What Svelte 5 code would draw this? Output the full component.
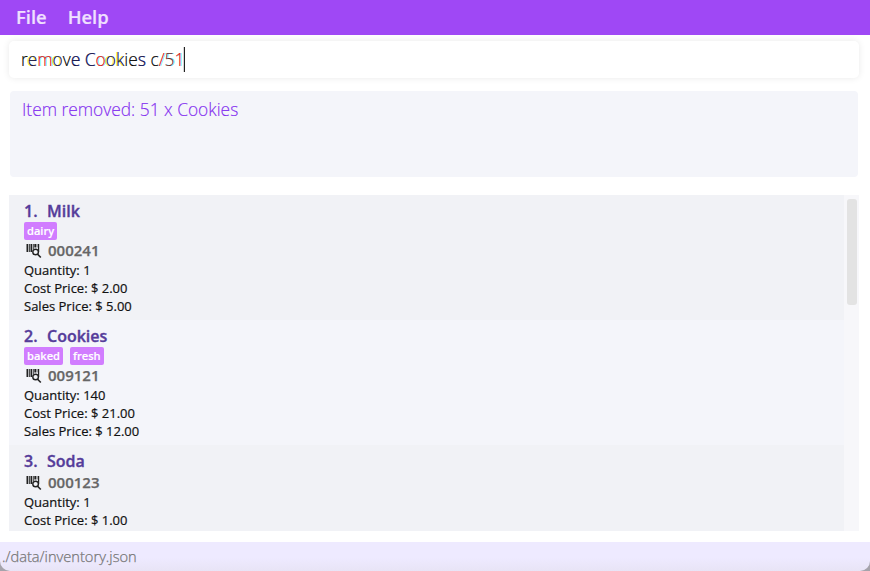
<script>
  const items = [
    { name: 'Milk', tags: ['dairy'], code: '000241', lines: ['Quantity: 1', 'Cost Price: $ 2.00', 'Sales Price: $ 5.00'] },
    { name: 'Cookies', tags: ['baked', 'fresh'], code: '009121', lines: ['Quantity: 140', 'Cost Price: $ 21.00', 'Sales Price: $ 12.00'] },
    { name: 'Soda', tags: [], code: '000123', lines: ['Quantity: 1', 'Cost Price: $ 1.00'] }
  ];

  // Runs of the typed command with the colour fringe each one carries.
  const command = [
    ['r', ''], ['e', 'warm'], ['m', 'red'], ['o', 'warm'], ['v', ''], ['e', 'cool'], [' ', ''],
    ['C', 'cool'], ['o', 'red'], ['o', 'warm'], ['k', 'warm'], ['i', ''], ['e', ''], ['s', 'cool'],
    [' c', ''], ['/', 'red'], ['5', 'teal'], ['1', 'red']
  ];
</script>

<div class="window">
  <nav class="menu"><span class="file">File</span><span class="help">Help</span></nav>
  <main>
    <div class="command"><div class="typed">{#each command as [text, tone]}<span class={tone}>{text}</span>{/each}</div><i class="caret"></i></div>
    <div class="result">Item removed: 51 x Cookies</div>
    <section class="panel">
      <div class="list">
        {#each items as item, i}
          <article>
            <h2><span class="num">{i + 1}.</span><span>{item.name}</span></h2>
            {#if item.tags.length}
              <div class="tags">{#each item.tags as tag}<span class="tag">{tag}</span>{/each}</div>
            {/if}
            <div class="code">
              <svg width="17" height="16" viewBox="0 0 17 16">
                <path d="M1.5 1h1.7v8H1.5zM3.9 1h.9v8h-.9zM5.5 1h1.7v8H5.5zM7.9 1h.8v5.2h-.8zM9.3 1h1.8v3.6H9.3zM11.7 1h.7v3.6h-.7zM13 1h1.2v8H13z" fill="#222" />
                <circle cx="10.6" cy="9" r="2.8" fill="#f2f3f7" stroke="#222" stroke-width="1.4" />
                <path d="M12.6 11.2l3.2 3.3" stroke="#222" stroke-width="1.6" />
              </svg>
              <span>{item.code}</span>
            </div>
            {#each item.lines as line}<p>{line}</p>{/each}
          </article>
        {/each}
      </div>
      <div class="track"><div class="thumb"></div></div>
    </section>
  </main>
  <footer><div class="status">./data/inventory.json</div></footer>
</div>

<style>
  .window { width: 870px; height: 571px; display: flex; flex-direction: column; background: #fff; font-family: "Open Sans", "Noto Sans", sans-serif; overflow: hidden; white-space: nowrap; }
  .menu { height: 35px; flex: none; background: #9f48f5; color: #f0e0ff; font-size: 18.4px; font-weight: 600; line-height: 33px; display: flex; padding-left: 16px; gap: 21px; box-sizing: border-box; -webkit-text-stroke: .2px #f0e0ff; }
  main { flex: 1; min-height: 0; padding: 6px 11px 11px 9px; display: flex; flex-direction: column; }
  .command { height: 37px; flex: none; border-radius: 5px; box-shadow: 0 0 7px rgba(0, 0, 0, .09); display: flex; align-items: center; padding-left: 12px; box-sizing: border-box; color: #000; font-size: 17.35px; font-weight: 300; }
  .typed { white-space: pre; padding-bottom: 2px; -webkit-text-stroke: .15px currentColor; }
  .warm { color: #111155; text-shadow: -1px 0 0 #ffff00; }
  .cool { color: #111144; text-shadow: .4px 0 0 #0000c080; }
  .red { color: #e01010; text-shadow: 1px 0 0 #00ffffb0; }
  .teal { color: #703030; text-shadow: 1px 0 0 #00ffffb0; }
  .caret { width: 1px; height: 25px; margin-left: -.3px; background: #222; box-shadow: -1px 0 0 #9996; }
  .result { height: 86px; flex: none; margin: 13px 1px 18px; border-radius: 4px; background: #f4f5fa; color: #8430f0; font-size: 17.35px; font-weight: 300; line-height: 24px; padding: 6px 12px; box-sizing: border-box; -webkit-text-stroke: .15px #8430f0; }
  .panel { flex: 1; min-height: 0; display: flex; background: #f7f7fa; }
  .list { flex: 1; overflow: hidden; }
  article { padding: 7px 15px 5px; background: #f1f2f6; }
  article:nth-child(even) { background: #f4f5fa; }
  h2 { margin: 0; height: 20px; line-height: 19px; font-size: 16px; font-weight: 600; color: #553c9a; display: flex; -webkit-text-stroke: .35px #553c9a; }
  .num { width: 23px; }
  .tags { height: 18px; display: flex; gap: 7px; }
  .tag { height: 18px; border-radius: 2px; background: #d17dff; color: #fff; padding: 0 3px; font-size: 11.1px; font-weight: 600; line-height: 18px; -webkit-text-stroke: .15px #fff; }
  .code { height: 19px; padding-bottom: 2px; display: flex; align-items: center; color: #666; font-size: 15px; font-weight: 600; -webkit-text-stroke: .25px #666; }
  .code svg { margin: 2px 6px 0 1px; }
  p { margin: 0; height: 18px; line-height: 18px; font-size: 13px; color: #111; -webkit-text-stroke: .2px #111; }
  .track { width: 15px; padding: 4px 2px 0 3px; box-sizing: border-box; }
  .thumb { height: 106px; border-radius: 3px; background: #e3e3e3; }
  footer { height: 29px; flex: none; background: #a5a3ab; }
  .status { height: 29px; box-sizing: border-box; padding-left: 2px; border-radius: 0 0 10px 10px; background: linear-gradient(#eeeaff 55%, #e8e4f6); color: #777; font-size: 14.65px; line-height: 29px; font-weight: 300; -webkit-text-stroke: .25px #777; }
</style>
